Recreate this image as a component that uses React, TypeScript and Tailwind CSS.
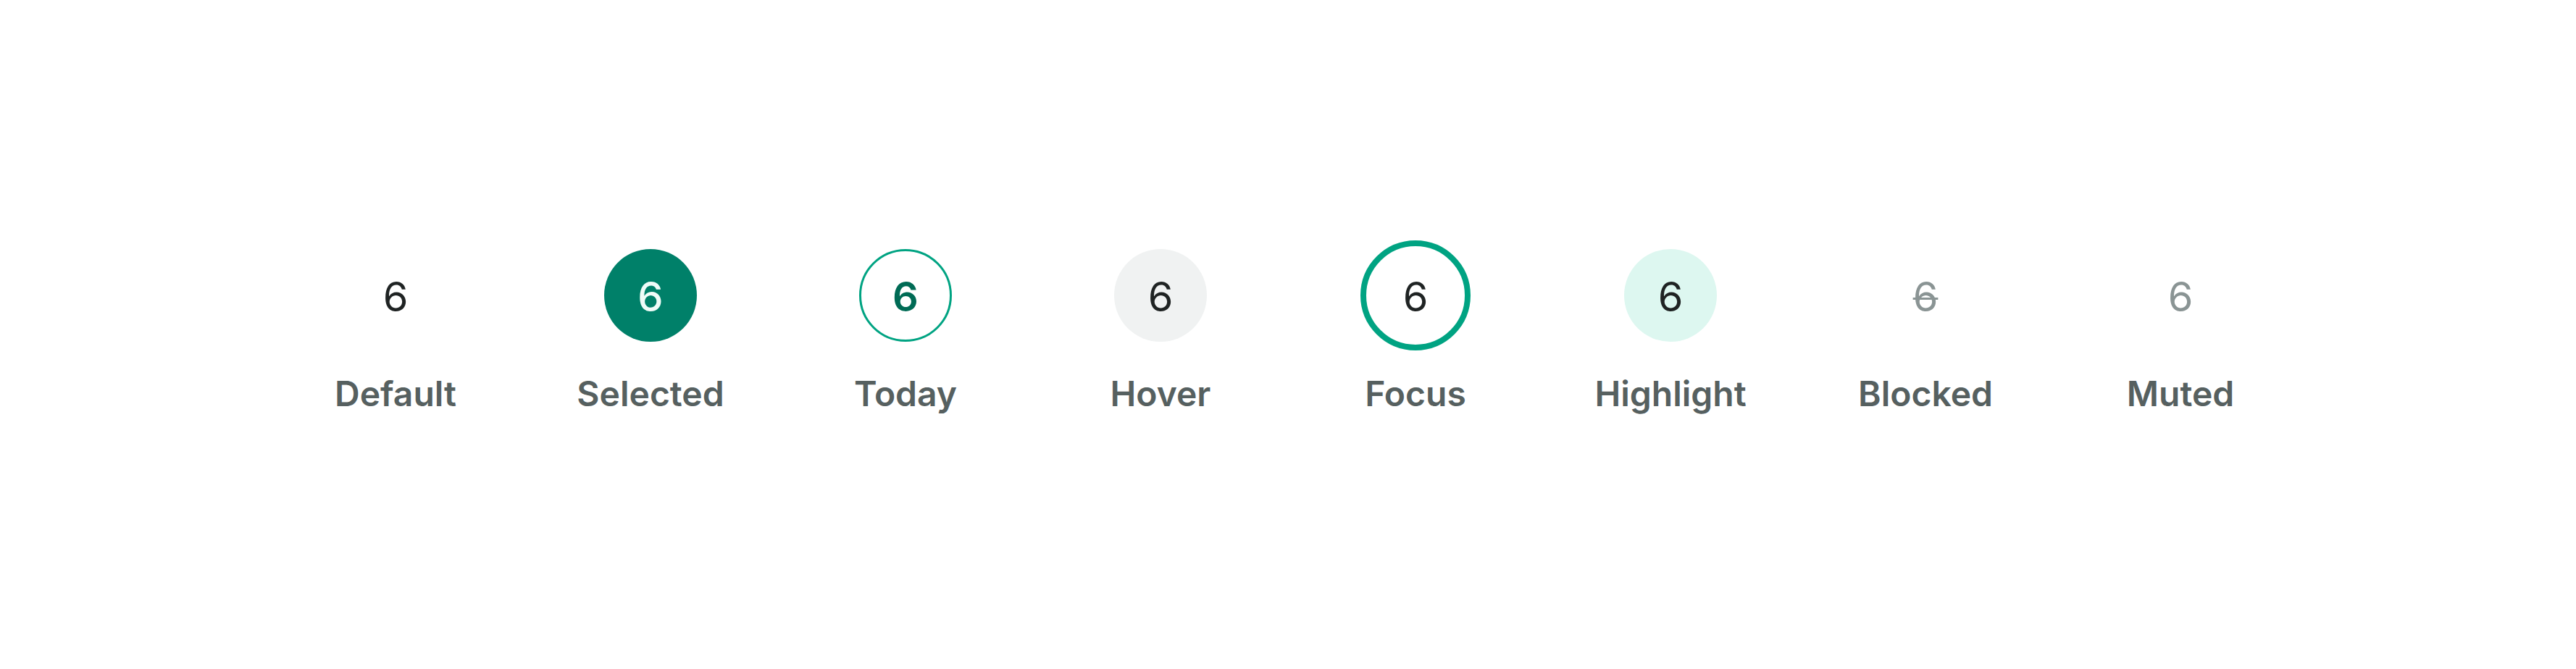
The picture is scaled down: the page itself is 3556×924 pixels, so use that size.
type Variant = "default" | "selected" | "today" | "hover" | "focus" | "highlight" | "blocked" | "muted";

const states: { label: string; variant: Variant }[] = [
    {label: "Default", variant: "default"},
    {label: "Selected", variant: "selected"},
    {label: "Today", variant: "today"},
    {label: "Hover", variant: "hover"},
    {label: "Focus", variant: "focus"},
    {label: "Highlight", variant: "highlight"},
    {label: "Blocked", variant: "blocked"},
    {label: "Muted", variant: "muted"},
];

const dayClasses: Record<Variant, string> = {
    default: "text-[#1f2323] font-normal",
    selected: "bg-[#008069] text-[#effcf8] font-medium",
    today: "border-[3px] border-[#00a382] text-[#006b55] font-semibold",
    hover: "bg-[#f0f2f2] text-[#1f2323] font-normal",
    focus: "outline-8 outline-offset-4 outline-[#00a382] text-[#1f2323] font-normal",
    highlight: "bg-[#ddf7f0] text-[#1f2323] font-normal",
    blocked: "text-[#8a9494] font-normal line-through decoration-[3px]",
    muted: "text-[#8a9494] font-normal",
};

function DayCell({variant}: { variant: Variant }) {
    return <div
        className={`flex h-32 w-32 items-center justify-center rounded-full pt-[3px] text-[56px] leading-none ${dayClasses[variant]}`}>
        6
    </div>
}

export default function App() {
    return <div className="flex min-h-screen w-full items-center justify-center bg-white font-['Inter',sans-serif]">
        <div className="grid grid-cols-[repeat(8,352px)]">
            {states.map(({label, variant}) => (
                <div key={label} className="flex flex-col items-center gap-[36px]">
                    <DayCell variant={variant}/>
                    <span className="text-[48px] leading-[72px] font-semibold text-[#566060]">{label}</span>
                </div>
            ))}
        </div>
    </div>
}
